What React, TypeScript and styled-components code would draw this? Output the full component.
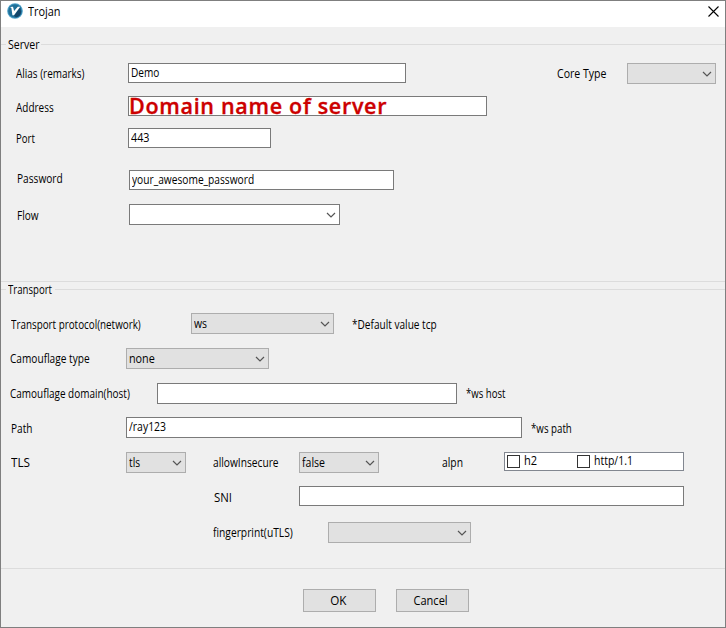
import React from 'react';
import styled, { createGlobalStyle, css } from 'styled-components';

const GlobalStyle = createGlobalStyle`
  *, *::before, *::after { box-sizing: border-box; }
  body { margin: 0; }
`;

const Window = styled.main`
  width: 726px;
  height: 628px;
  display: flex;
  flex-direction: column;
  border: 1px solid #7f7f7f;
  background: #f0f0f0;
  color: #000;
  font: 12px/20px "Open Sans", "Noto Sans", sans-serif;
  white-space: nowrap;
  overflow: hidden;
`;

const TitleBar = styled.header`
  height: 26px;
  flex: none;
  display: flex;
  background: #fff;
  padding-left: 6px;
`;

const Title = styled.h1`
  margin: 1px 0 0 5px;
  font: inherit;
  flex: 1;
`;

const CloseButton = styled.button`
  width: 11px;
  height: 11px;
  margin: 5px 6px 0 0;
  padding: 0;
  border: 0;
  background: none;
  display: flex;
`;

const Logo = styled.svg`
  width: 16px;
  height: 16px;
  margin-top: 2px;
`;

/* Condensed run of text; $fit is its horizontal compression. */
const Text = styled.span<{ $fit: number; $origin?: string }>`
  display: inline-block;
  vertical-align: top;
  transform-origin: ${p => p.$origin ?? '0 0'};
  transform: scaleX(${p => p.$fit});
`;

const Section = styled.section<{ $height: number }>`
  height: ${p => p.$height}px;
  flex: none;
  border-bottom: 1px solid #dcdcdc;
  display: flow-root;
`;

const Legend = styled.div<{ $textWidth: number; $gap: number }>`
  height: 20px;
  margin-top: ${p => p.$gap}px;
  display: grid;
  grid-template-columns: 5px ${p => p.$textWidth}px 1fr;

  &::before, &::after {
    content: "";
    height: 1px;
    margin-top: 9px;
    background: #dcdcdc;
  }
  & > span { margin-left: 2px; }
`;

const Row = styled.div<{ $gap: number; $indent: number }>`
  display: flex;
  align-items: flex-start;
  height: 20px;
  margin-top: ${p => p.$gap}px;
  padding-left: ${p => p.$indent}px;
`;

const Label = styled.label<{ $width: number; $shift?: number }>`
  width: ${p => p.$width}px;
  flex: none;
  margin-top: ${p => (p.$shift ?? 0) + 1}px;
`;

const Hint = styled.span<{ $shift?: number }>`
  margin: ${p => (p.$shift ?? 0) + 1}px 0 0 9px;
`;

const control = css<{ $width: number }>`
  width: ${p => p.$width}px;
  flex: none;
  border: 1px solid #7a7a7a;
  background: #fff;
  line-height: 18px;
  padding-left: 2px;
`;

const Field = styled.div<{ $width: number; $tall?: boolean }>`
  ${control}
  height: ${p => (p.$tall ? 21 : 20)}px;
`;

const Placeholder = styled.span`
  display: block;
  margin-left: -2px;
  color: #c00;
  font: 600 21.5px/18px "Open Sans", "Noto Sans", sans-serif;
  letter-spacing: 0.7px;
  -webkit-text-stroke: 0.35px #c00;
`;

const SelectBox = styled.div<{ $width: number; $editable?: boolean }>`
  ${control}
  height: 21px;
  line-height: 20px;
  display: flex;
  justify-content: space-between;
  padding-right: 3px;
  ${p => !p.$editable && css`
    border-color: #adadad;
    background: #e1e1e1;
  `}
`;

const Chevron = styled.svg`
  width: 10px;
  height: 6px;
  margin: 7px 0 0 auto;
`;

const Spacer = styled.div<{ $width: number }>`
  width: ${p => p.$width}px;
  flex: none;
`;

const CheckList = styled.div`
  width: 180px;
  height: 19px;
  display: grid;
  grid-template-columns: 70px 1fr;
  border: 1px solid #828790;
  background: #fff;
  padding-left: 2px;
`;

const CheckItem = styled.label`
  display: flex;
  gap: 4px;
  line-height: 16px;
`;

const CheckBox = styled.span`
  width: 13px;
  height: 13px;
  margin-top: 2px;
  border: 1px solid #333;
  background: #fff;
`;

const Footer = styled.footer`
  display: flex;
  gap: 20px;
  padding: 20px 0 0 302px;
`;

const Button = styled.button`
  width: 73px;
  height: 23px;
  padding: 0 3px 0 0;
  border: 1px solid #adadad;
  background: #e1e1e1;
  color: #000;
  font: inherit;
  line-height: 21px;
`;

function Select({ width, value, fit = 1, editable }: { width: number; value?: string; fit?: number; editable?: boolean }) {
  return (
    <SelectBox $width={width} $editable={editable}>
      {value && <Text $fit={fit}>{value}</Text>}
      <Chevron viewBox="0 0 10 6">
        <path d="M1 1 L5 5 L9 1" fill="none" stroke="#555" strokeWidth="1.2" />
      </Chevron>
    </SelectBox>
  );
}

export default function App() {
  return (
    <>
      <GlobalStyle />
      <Window>
        <TitleBar>
          <Logo viewBox="0 0 16 16">
            <circle cx="8" cy="8" r="7.8" fill="#4a9fc8" />
            <circle cx="8" cy="8" r="6.8" fill="#1f6f98" />
            <path d="M7 12.8 L13 4.5 L14.2 9 A6.6 6.6 0 0 1 9 14.5 Z" fill="#14466a" />
            <path d="M3 4 L6 3.8 L7.1 8 L10.8 3.8 L13.2 3.8 L7 12.3 L5.4 12.3 L4.4 5 Z" fill="#fff" />
          </Logo>
          <Title><Text $fit={0.91}>Trojan</Text></Title>
          <CloseButton aria-label="Close">
            <svg width="11" height="11" viewBox="0 0 11 11">
              <path d="M.5 .5 L10.5 10.5 M10.5 .5 L.5 10.5" stroke="#000" strokeWidth="1.1" />
            </svg>
          </CloseButton>
        </TitleBar>

        <Section $height={255}>
          <Legend $textWidth={35} $gap={8}><Text $fit={0.88}>Server</Text></Legend>
          <Row $gap={8} $indent={15}>
            <Label $width={112}><Text $fit={0.828}>Alias (remarks)</Text></Label>
            <Field $width={278}><Text $fit={0.84}>Demo</Text></Field>
            <Spacer $width={151} />
            <Label $width={70}><Text $fit={0.88}>Core Type</Text></Label>
            <Select width={89} />
          </Row>
          <Row $gap={13} $indent={15}>
            <Label $width={112} $shift={1}><Text $fit={0.83}>Address</Text></Label>
            <Field $width={359}><Placeholder>Domain name of server</Placeholder></Field>
          </Row>
          <Row $gap={12} $indent={15}>
            <Label $width={112}><Text $fit={0.8}>Port</Text></Label>
            <Field $width={143}><Text $fit={0.9}>443</Text></Field>
          </Row>
          <Row $gap={22} $indent={16}>
            <Label $width={112} $shift={-2}><Text $fit={0.845}>Password</Text></Label>
            <Field $width={265}><Text $fit={0.85}>your_awesome_password</Text></Field>
          </Row>
          <Row $gap={14} $indent={16}>
            <Label $width={112} $shift={1}><Text $fit={0.84}>Flow</Text></Label>
            <Select width={211} editable />
          </Row>
        </Section>

        <Section $height={287}>
          <Legend $textWidth={49} $gap={-2}><Text $fit={0.8}>Transport</Text></Legend>
          <Row $gap={13} $indent={10}>
            <Label $width={180} $shift={1}><Text $fit={0.82}>Transport protocol(network)</Text></Label>
            <Select width={143} value="ws" fit={0.87} />
            <Spacer $width={9} />
            <Hint $shift={1}><Text $fit={0.84}>*Default value tcp</Text></Hint>
          </Row>
          <Row $gap={15} $indent={9}>
            <Label $width={116}><Text $fit={0.843}>Camouflage type</Text></Label>
            <Select width={143} value="none" fit={0.9} />
          </Row>
          <Row $gap={15} $indent={9}>
            <Label $width={147}><Text $fit={0.83}>Camouflage domain(host)</Text></Label>
            <Field $width={300} $tall />
            <Hint><Text $fit={0.8}>*ws host</Text></Hint>
          </Row>
          <Row $gap={14} $indent={10}>
            <Label $width={115} $shift={1}><Text $fit={0.84}>Path</Text></Label>
            <Field $width={396} $tall><Text $fit={0.87}>/ray123</Text></Field>
            <Hint $shift={1}><Text $fit={0.81}>*ws path</Text></Hint>
          </Row>
          <Row $gap={15} $indent={10}>
            <Label $width={115}><Text $fit={0.98}>TLS</Text></Label>
            <Select width={60} value="tls" fit={0.85} />
            <Spacer $width={27} />
            <Label $width={86}><Text $fit={0.85}>allowInsecure</Text></Label>
            <Select width={80} value="false" fit={0.88} />
            <Spacer $width={63} />
            <Label $width={62}><Text $fit={0.86}>alpn</Text></Label>
            <CheckList>
              <CheckItem><CheckBox /><Text $fit={0.92}>h2</Text></CheckItem>
              <CheckItem><CheckBox /><Text $fit={0.875}>http/1.1</Text></CheckItem>
            </CheckList>
          </Row>
          <Row $gap={14} $indent={213}>
            <Label $width={85} $shift={1}><Text $fit={0.95}>SNI</Text></Label>
            <Field $width={385} />
          </Row>
          <Row $gap={16} $indent={212}>
            <Label $width={115}><Text $fit={0.855}>fingerprint(uTLS)</Text></Label>
            <Select width={143} />
          </Row>
        </Section>

        <Footer>
          <Button><Text $fit={0.97} $origin="50% 0">OK</Text></Button>
          <Button><Text $fit={0.92} $origin="50% 0">Cancel</Text></Button>
        </Footer>
      </Window>
    </>
  );
}
